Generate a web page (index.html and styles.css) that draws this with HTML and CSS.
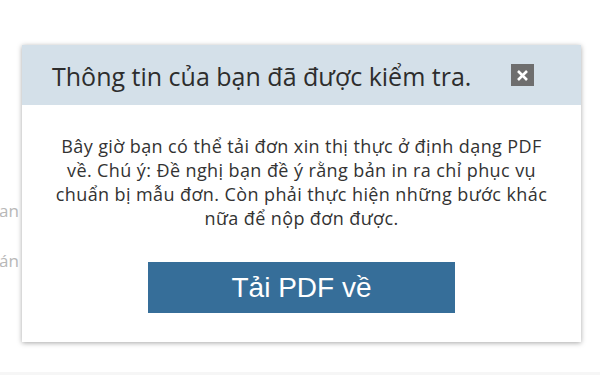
FILE: index.html
```html
<!DOCTYPE html>
<html lang="vi">
<head>
<meta charset="utf-8">
<link rel="stylesheet" href="styles.css">
</head>
<body>
<div class="page">
  <div class="bg-lines">
    <div class="bg-line">an</div>
    <div class="bg-line">án</div>
  </div>
  <div class="bottom-strip"></div>
</div>
<div class="dialog">
  <div class="dialog-header">
    <div class="dialog-title">Thông tin của bạn đã được kiểm tra.</div>
    <button class="close-btn" aria-label="Đóng">
      <svg width="13" height="13" viewBox="0 0 13 13"><path d="M2 2 L11 11 M11 2 L2 11" stroke="#fff" stroke-width="2.6" stroke-linecap="butt"/></svg>
    </button>
  </div>
  <div class="dialog-body">
    <p class="dialog-text">Bây giờ bạn có thể tải đơn xin thị thực ở định dạng PDF<br>về. Chú ý: Đề nghị bạn đề ý rằng bản in ra chỉ phục vụ<br>chuẩn bị mẫu đơn. Còn phải thực hiện những bước khác<br>nữa để nộp đơn được.</p>
    <button class="pdf-btn">Tải PDF về</button>
  </div>
</div>
</body>
</html>
```

FILE: styles.css
```css
html, body {
  margin: 0;
  padding: 0;
  background: #ffffff;
  width: 600px;
  height: 375px;
  overflow: hidden;
}
.page {
  width: 600px;
  height: 375px;
  display: flex;
  flex-direction: column;
  justify-content: space-between;
}
.bg-lines {
  padding-top: 199px;
  display: flex;
  flex-direction: column;
  gap: 26px;
}
.bg-line {
  font-family: "Open Sans", sans-serif;
  font-size: 17px;
  line-height: 24px;
  color: #b8b8b8;
  margin-left: -1px;
}
.bottom-strip {
  height: 3px;
  background: #f6f6f6;
}
.dialog {
  position: absolute;
  left: 22px;
  top: 45px;
  width: 559px;
  height: 297px;
  background: #ffffff;
  box-shadow: 0 1px 5px rgba(0,0,0,0.35);
  display: flex;
  flex-direction: column;
  font-family: "Open Sans", sans-serif;
}
.dialog-header {
  height: 60px;
  background: #d4e0e9;
  display: flex;
  align-items: center;
  justify-content: space-between;
  padding: 0 47px 0 30px;
}
.dialog-title {
  font-size: 25px;
  color: #2d2d2d;
  padding-top: 1px;
}
.close-btn {
  width: 23px;
  height: 22px;
  border: none;
  padding: 0;
  background: #6e6e6e;
  display: flex;
  align-items: center;
  justify-content: center;
}
.dialog-body {
  display: flex;
  flex-direction: column;
  align-items: center;
  padding-top: 29px;
}
.dialog-text {
  margin: 0;
  text-align: center;
  font-size: 18px;
  line-height: 24px;
  letter-spacing: 0.4px;
  color: #333333;
}
.pdf-btn {
  margin-top: 32px;
  width: 307px;
  height: 51px;
  border: none;
  background: #366e99;
  color: #ffffff;
  font-family: "Liberation Sans", Arial, sans-serif;
  font-size: 28px;
  padding: 0;
}
```
